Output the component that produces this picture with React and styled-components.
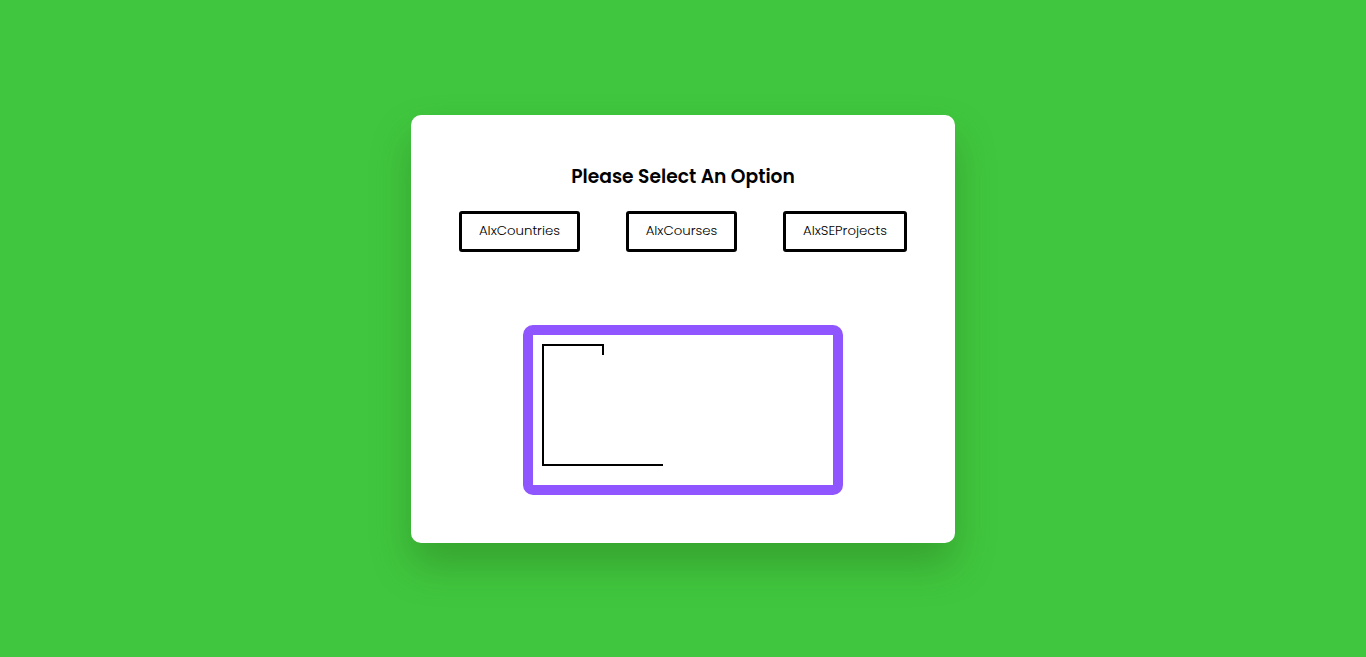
import React from 'react';
import styled, { createGlobalStyle } from 'styled-components';

const GlobalStyle = createGlobalStyle`
  html, body {
    margin: 0;
    padding: 0;
    background: #41c73f;
    font-family: "Poppins", "Lato", "Open Sans", sans-serif;
  }
`;

// full window, card in the middle
const Page = styled.div`
  display: flex;
  align-items: center;
  justify-content: center;
  width: 100vw;
  height: 657px;
  background: #41c73f;
`;

const Card = styled.div`
  display: flex;
  flex-direction: column;
  align-items: center;
  box-sizing: border-box;
  width: 544px;
  height: 428px;
  padding-top: 48px;
  background: #ffffff;
  border-radius: 10px;
  box-shadow: 0 22px 40px rgba(30, 80, 10, 0.3);
`;

const Title = styled.h2`
  margin: 0;
  font-size: 18.7px;
  line-height: 27px;
  font-weight: 600;
  color: #000;
`;

const Options = styled.div`
  display: flex;
  gap: 46px;
  margin-top: 21px;
`;

const OptionButton = styled.button`
  box-sizing: border-box;
  width: ${p => p.w}px;
  height: 41px;
  padding: 0;
  background: #fff;
  border: 3px solid #000;
  border-radius: 3px;
  font-family: inherit;
  font-size: 13.3px;
  font-weight: 300;
  color: #000;
  cursor: pointer;
`;

const Screen = styled.div`
  box-sizing: border-box;
  width: 320px;
  height: 170px;
  margin-top: 73px;
  padding: 9px;
  border: 10px solid #8f55ff;
  border-radius: 10px;
  background: #fff;
`;

const options = [
  { label: 'AlxCountries', w: 121 },
  { label: 'AlxCourses', w: 111 },
  { label: 'AlxSEProjects', w: 124 },
];

const App = () => (
  <>
    <GlobalStyle />
    <Page>
      <Card>
        <Title>Please Select An Option</Title>
        <Options>
          {options.map(o => (
            <OptionButton key={o.label} w={o.w}>{o.label}</OptionButton>
          ))}
        </Options>
        <Screen>
          <svg width="124" height="124" viewBox="0 0 124 124" style={{ display: 'block' }}>
            <path d="M61 11 V1 H1 V121 H121" fill="none" stroke="#000" strokeWidth="2" />
          </svg>
        </Screen>
      </Card>
    </Page>
  </>
);

export default App;
